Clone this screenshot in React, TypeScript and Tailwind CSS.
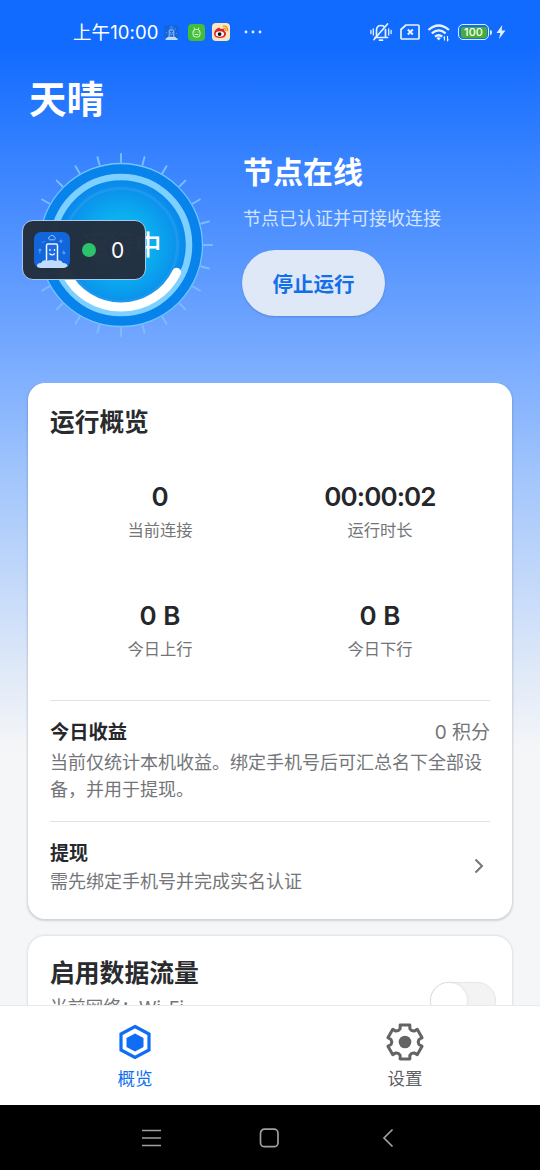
import React from "react";

const CJK = "font-['Noto_Sans_CJK_SC',sans-serif]";
const NUM = "font-['Inter','Noto_Sans_CJK_SC',sans-serif]";

function polar(cx: number, cy: number, r: number, deg: number) {
  const a = (deg * Math.PI) / 180;
  return [cx + r * Math.cos(a), cy + r * Math.sin(a)];
}

function AppLogo({ className }: { className: string }) {
  return (
    <svg viewBox="0 0 36 36" className={className}>
      <defs>
        <clipPath id="logoClip">
          <rect width="36" height="36" rx="7" />
        </clipPath>
      </defs>
      <g clipPath="url(#logoClip)">
        <rect width="36" height="36" fill="#1266dc" />
        <path d="M15.500 7.800a1.700 1.700 0 0 1 .5-3.200a2.300 2.300 0 0 1 4.300.4a1.500 1.500 0 0 1 .2 2.800z" fill="none" stroke="#b8d9ff" strokeWidth=".8" />
        <path d="M8 11l3-2M6 22l-1-4M28 21l2-3M25 9l3 2" stroke="#5b99ea" strokeWidth=".7" />
        <circle cx="6" cy="18" r="1.500" fill="#5b99ea" />
        <circle cx="27" cy="9" r="1.500" fill="#5b99ea" />
        <circle cx="30" cy="21" r="1.400" fill="#5b99ea" />
        <rect x="12.500" y="12" width="11" height="19" rx="1.500" fill="#1b6be0" stroke="#eef6ff" strokeWidth="1.500" />
        <path d="M16 17v2M20.500 17v2M15.500 21.500q2.600 3 5.200 0" fill="none" stroke="#fff" strokeWidth="1.200" />
        <path d="M3 36q-1-5 4-5q2-4 6-2q4-2 9 0q5-2 7 2q5 0 5 5z" fill="#c3dbfb" />
      </g>
    </svg>
  );
}

function StatusBar() {
  return (
    <div className="flex h-16 shrink-0 items-center pl-[73px] pr-[34px] text-white">
      <span className={`${NUM} w-[86px] whitespace-nowrap text-[18.500px] leading-6 tracking-[0.100px]`}>上午10:00</span>
      <AppLogo className="ml-[5px] mt-px size-[15px]" />
      <svg viewBox="0 0 17 17" className="ml-[9px] size-[17px]">
        <rect width="17" height="17" rx="4" fill="#43bd3a" />
        <path d="M6 3.500l.8 2M11 3.500l-.8 2" stroke="#d8ffd0" strokeWidth=".9" />
        <rect x="5" y="5.500" width="7" height="7.500" rx="2.500" fill="none" stroke="#d8ffd0" strokeWidth="1" />
        <path d="M6.500 8h1M9.500 8h1M6.500 10.500h4" stroke="#d8ffd0" strokeWidth="1" />
      </svg>
      <svg viewBox="0 0 18 18" className="ml-[7px] size-[18px]">
        <rect width="18" height="18" rx="4" fill="#fbe6bd" />
        <path d="M2 11q0-4 4-6q2-1 2.500 1q4-1 4 2q2 1 1.500 3.500q-1 3.500-6 3.500q-5.500 0-6-4z" fill="#d8232a" />
        <ellipse cx="7.800" cy="11" rx="4.200" ry="2.800" fill="#fff" />
        <circle cx="7.600" cy="11.100" r="1.900" fill="#15100f" />
        <path d="M11 3.200q5-.5 4.500 5M11.300 5.500q2.600-.3 2.200 2.300" fill="none" stroke="#ef8c20" strokeWidth="1.300" />
      </svg>
      <svg viewBox="0 0 20 6" className="ml-[13px] h-[6px] w-5 fill-white/90">
        <circle cx="3" cy="3" r="1.400" />
        <circle cx="10" cy="3" r="1.400" />
        <circle cx="17" cy="3" r="1.400" />
      </svg>
      <div className="ml-auto flex items-center">
        <svg viewBox="0 0 22 20" className="h-5 w-[22px]" fill="none" stroke="#e8f3ff" strokeWidth="1.700" strokeLinecap="round">
          <path d="M5 15.500h12.500M6.500 14.500v-6q0-5 4.500-5q2 0 3 1M15.500 7.500v7M9.500 18.200h3" />
          <path d="M17.500 2L4 17.500" />
          <path d="M3.300 7v6M.9 8.500v3M18.700 7v6M21.100 8.500v3" strokeWidth="1.300" />
        </svg>
        <svg viewBox="0 0 20 16" className="ml-2 h-4 w-5" fill="none" stroke="#e8f3ff" strokeWidth="1.700" strokeLinejoin="round">
          <path d="M6 1h12q1 0 1 1v12q0 1-1 1h-16q-1 0-1-1v-8.500z" />
          <path d="M7.800 5.500l5 5M12.800 5.500l-5 5" strokeWidth="1.900" />
        </svg>
        <svg viewBox="0 0 24 19" className="ml-[7px] h-[19px] w-6" fill="none" stroke="#e8f3ff" strokeWidth="2.300">
          <path d="M1.500 7q10-9 20.500 0M4.800 10.400q7-6 13.800 0M8 13.700q3.700-3 7.200 0" />
          <path d="M9.400 15q2.300-1.600 4.500 0l-2.200 2.500z" fill="#e8f3ff" stroke="none" />
          <path d="M17.500 17.500v-3.500l-1 1M20.500 13v4.500l1-1.200" strokeWidth="1.100" />
        </svg>
        <div className="ml-[7px] flex h-4 w-[31px] items-center justify-center rounded-[5px] border-[1.500px] border-[#dcecff] p-[1.500px]">
          <div className={`${NUM} flex h-full w-full items-center justify-center rounded-[2px] bg-[#48ad35] text-[11px] font-medium leading-none`}>100</div>
        </div>
        <div className="ml-px h-[5px] w-[2px] rounded-r bg-[#dcecff]" />
        <svg viewBox="0 0 10 14" className="ml-1 h-[14px] w-[10px]">
          <path d="M6.300 0L.5 8h3.800L3 14l6.500-8.500H5.700z" fill="#dfeeff" />
        </svg>
      </div>
    </div>
  );
}

function Dial() {
  const arcStart = polar(93, 93, 62, 26);
  const arcEnd = polar(93, 93, 62, 154);
  return (
    <svg viewBox="0 0 186 186" className="size-[186px] shrink-0">
      <defs>
        <radialGradient id="core" cx="50%" cy="50%" r="50%">
          <stop offset="0" stopColor="#06bdf2" />
          <stop offset="0.450" stopColor="#0bb0ef" />
          <stop offset="1" stopColor="#0a88ec" />
        </radialGradient>
      </defs>
      {Array.from({ length: 24 }, (_, i) => {
        const [x1, y1] = polar(93, 93, 83, i * 15);
        const [x2, y2] = polar(93, 93, 91, i * 15);
        return <line key={i} x1={x1} y1={y1} x2={x2} y2={y2} stroke="#7bbcff" strokeWidth="2" strokeLinecap="round" />;
      })}
      <circle cx="93" cy="93" r="81.500" fill="#0883ec" stroke="#73c5ff" strokeWidth="1.300" />
      <circle cx="93" cy="93" r="65" fill="url(#core)" />
      <circle cx="93" cy="93" r="68" fill="none" stroke="#7dd0ff" strokeWidth="6.500" />
      <circle cx="93" cy="93" r="56.500" fill="none" stroke="#1d98ef" strokeWidth="3" />
      <path d={`M${arcStart[0]} ${arcStart[1]}A62 62 0 0 1 ${arcEnd[0]} ${arcEnd[1]}`} fill="none" stroke="#fff" strokeWidth="9" strokeLinecap="round" />
      <text x="93" y="103" textAnchor="middle" className={`${CJK} fill-white text-[27px] font-medium`}>运行中</text>
    </svg>
  );
}

function Stat({ value, label, tight = false }: { value: string; label: string; tight?: boolean }) {
  return (
    <div className="flex flex-col items-center">
      <div className={`${NUM} text-[26px] font-semibold leading-8 text-[#25272a] ${tight ? "tracking-[-0.900px]" : ""}`}>{value}</div>
      <div className="mt-[4px] text-[16.300px] leading-6 text-[#737578]">{label}</div>
    </div>
  );
}

function GearIcon() {
  const pts: string[] = [];
  for (let k = 0; k < 6; k++) {
    const a = -90 + k * 60;
    [[-30, 13.2], [-20, 14.2], [-16, 17.6], [16, 17.6], [20, 14.2]].forEach(([d, r]) => {
      const [x, y] = polar(20, 20, r, a + d);
      pts.push(`${x.toFixed(2)},${y.toFixed(2)}`);
    });
  }
  return (
    <svg viewBox="0 0 40 40" className="size-10">
      <polygon points={pts.join(" ")} fill="none" stroke="#626466" strokeWidth="3" strokeLinejoin="round" />
      <circle cx="20" cy="20" r="6.300" fill="#626466" />
    </svg>
  );
}

export default function App() {
  return (
    <div className={`${CJK} relative flex h-[1170px] w-[540px] flex-col overflow-hidden bg-[#f5f6f8] bg-[linear-gradient(180deg,#116bff_0px,#116bff_45px,#76a9ff_350px,#a3c6fc_480px,#dfe9f8_670px,#f5f6f8_750px)]`}>
      <StatusBar />
      <h1 className="mt-[9px] h-12 shrink-0 pl-[29px] text-[37.500px] font-bold leading-[48px] text-white">天晴</h1>

      <section className="mt-[31px] flex h-[186px] shrink-0 pl-[28px]">
        <Dial />
        <div className="flex flex-col items-start pl-[29px]">
          <h2 className="-mt-px text-[30px] font-bold leading-[38px] text-white">节点在线</h2>
          <p className="mt-[15px] text-[18px] leading-[26px] text-[#d3e4ff]">节点已认证并可接收连接</p>
          <button className="-ml-px mt-5 h-[66px] w-[143px] rounded-full bg-[#dee8f6] text-[20.500px] font-bold text-[#126fe8] shadow-[0_1px_2px_rgba(40,80,150,0.35)]">
            停止运行
          </button>
        </div>
      </section>

      <main className="mt-[45px] flex min-h-0 flex-1 flex-col overflow-hidden px-7">
        <section className="h-[536px] shrink-0 rounded-[17px] bg-white px-[22px] pt-[19px] shadow-[0_1px_2px_1px_rgba(60,70,90,0.2)]">
          <h3 className="text-[24.700px] font-bold leading-9 text-[#292b2e]">运行概览</h3>
          <div className="mt-[43px] grid grid-cols-2 gap-y-[59px]">
            <Stat value="0" label="当前连接" />
            <Stat value="00:00:02" label="运行时长" tight />
            <Stat value="0 B" label="今日上行" />
            <Stat value="0 B" label="今日下行" />
          </div>
          <div className="mt-10 border-t border-[#e2e3e5] pt-4">
            <div className="flex justify-between leading-7">
              <span className="text-[19.300px] font-bold text-[#25272a]">今日收益</span>
              <span className={`${NUM} pt-[2px] text-[19px] leading-7 text-[#737578]`}>0 积分</span>
            </div>
            <p className="mt-px whitespace-nowrap text-[18px] leading-[27px] text-[#737578]">
              当前仅统计本机收益。绑定手机号后可汇总名下全部设<br />备，并用于提现。
            </p>
          </div>
          <div className="mt-[19px] flex items-center justify-between border-t border-[#e2e3e5] pt-4">
            <div>
              <div className="text-[19px] font-bold leading-7 text-[#25272a]">提现</div>
              <div className="mt-px text-[18px] leading-[27px] text-[#737578]">需先绑定手机号并完成实名认证</div>
            </div>
            <svg viewBox="0 0 10 16" className="mr-[6px] h-4 w-[10px]" fill="none" stroke="#737578" strokeWidth="2">
              <path d="M1.500 1.500L8 8l-6.500 6.500" />
            </svg>
          </div>
        </section>

        <section className="mt-[17px] flex h-[120px] shrink-0 justify-between rounded-[17px] bg-white pl-[22px] pr-4 pt-[17px] shadow-[0_0_2px_1px_rgba(60,70,90,0.12)]">
          <div>
            <h3 className="text-[24.800px] font-bold leading-9 text-[#292b2e]">启用数据流量</h3>
            <p className={`${NUM} mt-[5px] text-[17.800px] leading-[27px] text-[#737578]`}>当前网络：Wi-Fi</p>
          </div>
          <div className="mt-[29px] h-[37px] w-[66px] rounded-full border border-[#e5e6e8] bg-[#f3f3f4]">
            <div className="h-[35px] w-[36px] rounded-full bg-white shadow-[0_0_3px_rgba(0,0,0,0.12)]" />
          </div>
        </section>
      </main>

      <nav className="grid h-[100px] shrink-0 grid-cols-2 border-t border-[#e9eaec] bg-white">
        <div className="flex flex-col items-center pt-4 text-[#1270ed]">
          <svg viewBox="0 0 40 40" className="size-10">
            <path d="M20 4.500L34 12v16L20 35.500L6 28V12z" fill="none" stroke="#0f6df5" strokeWidth="3.200" />
            <path d="M20 11.500l8.500 4.500v9L20 29.500L11.500 25v-9z" fill="#0f6df5" />
          </svg>
          <span className="mt-[4px] text-[17.500px] leading-6">概览</span>
        </div>
        <div className="flex flex-col items-center pt-4 text-[#5f6164]">
          <GearIcon />
          <span className="mt-[4px] text-[17.500px] leading-6">设置</span>
        </div>
      </nav>

      <div className="flex h-[65px] shrink-0 items-center bg-black pl-[141px]">
        <svg viewBox="0 0 20 20" className="size-5" stroke="#a0a0a0" strokeWidth="1.700">
          <path d="M1 2.500h19M1 10h19M1 17.500h19" />
        </svg>
        <svg viewBox="0 0 20 20" className="ml-[98px] size-5" fill="none" stroke="#a0a0a0" strokeWidth="1.700">
          <rect x="1.500" y="1.200" width="17.500" height="17.500" rx="4" />
        </svg>
        <svg viewBox="0 0 12 20" className="ml-[103px] h-5 w-3" fill="none" stroke="#a0a0a0" strokeWidth="1.700">
          <path d="M10.500 1.500L2 10l8.500 8.500" />
        </svg>
      </div>

      <div className="absolute left-[22px] top-[220px] flex h-[60px] w-[124px] items-center rounded-[11px] border border-[#a9c8ee] bg-[#232f3e]/98 pl-[11px]">
        <AppLogo className="size-9" />
        <span className="ml-3 size-[14px] rounded-full bg-[#2bc46d]" />
        <span className={`${NUM} ml-[15px] mt-[2px] text-[21px] leading-7 text-white`}>0</span>
      </div>
    </div>
  );
}
